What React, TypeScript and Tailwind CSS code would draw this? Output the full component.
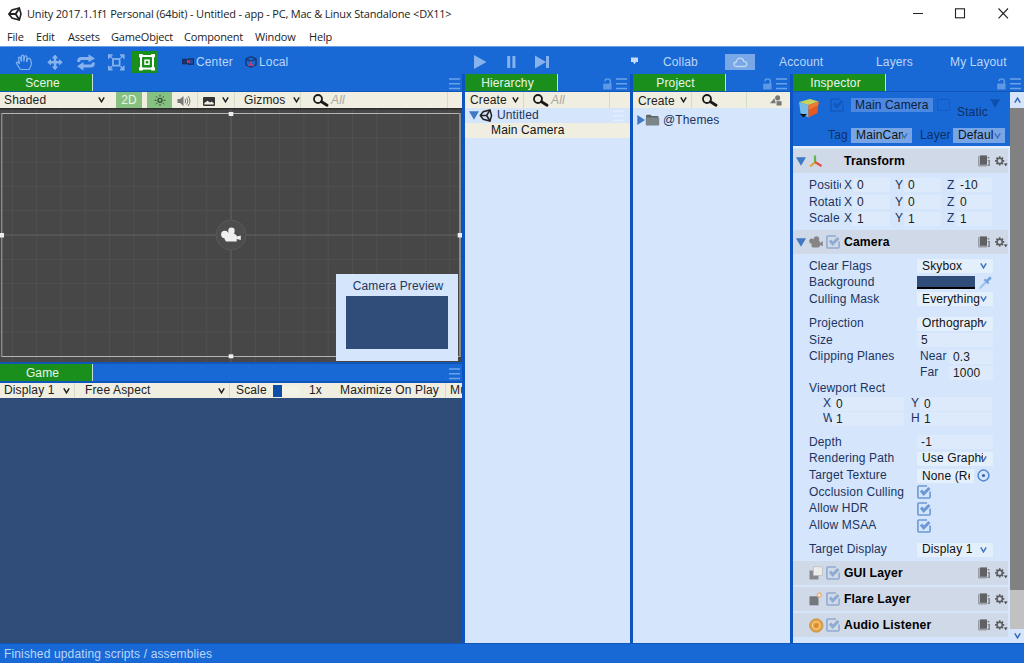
import { ReactNode } from "react";

function UnityLogo({ className }: { className: string }) {
  return (
    <svg className={className} viewBox="0 0 14 14" fill="none" stroke="#222" strokeWidth={1.6}>
      <path d="M0.9 7 L4 2.9 L11.3 1 L13 7 L11.3 13 L4 11.1 Z" />
      <path d="M1 7 H7.6 L11.3 1.2 M7.6 7 L11.3 12.8" strokeWidth={1.8} />
    </svg>
  );
}

function Chevron({ className }: { className: string }) {
  return (
    <svg className={`w-[7px] h-[6px] shrink-0 ${className}`} viewBox="0 0 7 6" fill="none" stroke="currentColor" strokeWidth={1.5}>
      <path d="M0.8 0.4 L3.5 4.8 L6.2 0.4" />
    </svg>
  );
}

function MenuLines({ className }: { className: string }) {
  return (
    <svg className={`w-[11px] h-[12px] shrink-0 ${className}`} viewBox="0 0 11 12" stroke="currentColor" strokeWidth={1.4}>
      <path d="M0 1 H11 M0 5.7 H11 M0 10.5 H11" />
    </svg>
  );
}

function Lock() {
  return (
    <svg className="w-[9px] h-[12px] shrink-0 text-[#5f98e4]" viewBox="0 0 9 12">
      <path d="M2.2 3.2 V2.6 Q2.2 1 4.8 1 Q7.3 1 7.3 3 V6" fill="none" stroke="currentColor" strokeWidth={1.6} />
      <rect x="0.2" y="5.6" width="8.3" height="5.8" fill="currentColor" />
    </svg>
  );
}

function Search() {
  return (
    <svg className="w-[16px] h-[13px] shrink-0" viewBox="0 0 16 13" fill="none" stroke="#1a1a1a">
      <circle cx="5" cy="5" r="4" strokeWidth={1.8} />
      <path d="M8.5 7.8 L14 11.2" strokeWidth={2.8} strokeLinecap="round" />
    </svg>
  );
}

function Check({ className = "text-[#6c98d4]" }: { className?: string }) {
  return (
    <svg className={`w-[14px] h-[14px] shrink-0 ${className}`} viewBox="0 0 14 14" fill="none" stroke="currentColor">
      <path d="M10 1 H1.8 Q0.9 1 0.9 2 V12 Q0.9 13 1.8 13 H12.2 Q13.1 13 13.1 12 V6.5" strokeWidth={1.6} />
      <path d="M4 5.6 L6.7 8.7 L12.4 3" strokeWidth={3} />
    </svg>
  );
}

function Triangle({ className }: { className: string }) {
  return (
    <svg className={`w-[10px] h-[9px] shrink-0 ${className}`} viewBox="0 0 10 9" fill="currentColor">
      <path d="M0 0.3 H10 L5 8.8 Z" />
    </svg>
  );
}

function CameraIcon() {
  return (
    <svg className="w-[14px] h-[12px] shrink-0" viewBox="0 0 14 12" fill="#858585">
      <circle cx="7.5" cy="3" r="2.7" />
      <circle cx="2.8" cy="5" r="2.6" />
      <rect x="2.5" y="4.5" width="8.3" height="7" rx="1.4" />
      <path d="M10 6.8 L11.5 6.8 L13.8 5 V10.3 L11.5 9.2 H10 Z" />
    </svg>
  );
}

function BookIcon() {
  return (
    <svg className="w-[12px] h-[12px] shrink-0" viewBox="0 0 12 12">
      <path d="M0 1.6 L1.6 0.4 V10 L8.8 10 V11.6 H1 L0 10.8 Z" fill="#9a9da3" />
      <rect x="2" y="0.4" width="7" height="9.4" fill="#5f6165" />
      <path d="M9.6 2.8 H11.3 M9.8 5.6 H11.8 M11.2 6 V10.4 H9.6" stroke="#7c7f85" strokeWidth={1.4} fill="none" />
    </svg>
  );
}

function GearIcon() {
  return (
    <svg className="w-[13px] h-[11px] shrink-0" viewBox="0 0 13 11" fill="none" stroke="#5a5c60">
      <circle cx="4.7" cy="4.9" r="2.6" strokeWidth={1.5} />
      <path d="M4.7 0.3 V2 M4.7 7.8 V9.6 M0.1 4.9 H1.8 M7.6 4.9 H9.3 M1.4 1.6 L2.7 2.9 M6.7 6.9 L8 8.2 M1.4 8.2 L2.7 6.9 M6.7 2.9 L8 1.6" strokeWidth={1.7} />
      <path d="M8.9 7.5 H12.6 L10.7 10.3 Z" fill="#44464a" stroke="none" />
    </svg>
  );
}

function Tab({ label, children }: { label: string; children?: ReactNode }) {
  return (
    <div className="flex h-[18px] shrink-0 items-center justify-between border-b border-[#1157b8] bg-[#1869d6]">
      <div className="h-[17px] w-[93px] border-r border-[#c4e2d4] bg-[#1b8f1b] pr-[7px] pt-px text-center leading-[17px] text-[#e8f5ee]">
        {label}
      </div>
      <div className="flex items-center gap-[4px] pr-[3px] pt-[2px]">{children}</div>
    </div>
  );
}

function Divider({ className }: { className: string }) {
  return <div className={`h-4 w-px shrink-0 bg-[#d0dec3] ${className}`} />;
}

function Header({ title, icon, check = true, open = false }: { title: string; icon: ReactNode; check?: boolean; open?: boolean }) {
  return (
    <div className="mr-[2px] flex h-6 shrink-0 items-center bg-[#d0d9e7] pl-[3px]">
      <div className="w-[13px]">{open && <Triangle className="text-[#3f78c3]" />}</div>
      <div className="flex w-[17px] items-center">{icon}</div>
      <div className="w-[18px]">{check && <Check className="text-[#8fabd1]" />}</div>
      <span className="flex-1 text-[12.2px] font-bold text-black">{title}</span>
      <BookIcon />
      <div className="ml-[5px]">
        <GearIcon />
      </div>
    </div>
  );
}

function Row({ label, children }: { label: string; children?: ReactNode }) {
  return (
    <div className="flex h-[16.7px] shrink-0 items-center pl-4">
      <span className="w-[108px] shrink-0 whitespace-nowrap">{label}</span>
      {children}
    </div>
  );
}

function Select({ value }: { value: string }) {
  return (
    <div className="flex h-[14px] w-[76px] items-center bg-[#e4effc] pl-[5px] text-[#111]">
      <span className="w-[61px] shrink-0 overflow-hidden whitespace-nowrap">{value}</span>
      <Chevron className="-ml-[3px] text-[#3c73c0]" />
    </div>
  );
}

function Field({ value, className = "w-[76px]" }: { value: string; className?: string }) {
  return <div className={`h-[14px] shrink-0 bg-[#dceafb] pl-1 leading-[14px] text-[#222] ${className}`}>{value}</div>;
}

function VectorRow({ label, values }: { label: string; values: string[] }) {
  return (
    <div className="flex h-[16.7px] items-center pl-4">
      <span className="w-[32px] shrink-0 overflow-hidden whitespace-nowrap">{label}</span>
      <span className="ml-[3px] w-[9px]">X</span>
      <Field value={values[0]} className="w-[37px]" />
      <span className="ml-[5px] w-[9px]">Y</span>
      <Field value={values[1]} className="w-[37px]" />
      <span className="ml-[6px] w-[9px]">Z</span>
      <Field value={values[2]} className="w-[36px]" />
    </div>
  );
}

function PairRow({ items }: { items: [string, string][] }) {
  return (
    <div className="flex h-[15px] items-center pl-[30px]">
      {items.map(([label, value]) => (
        <div key={label} className="flex w-[88px] items-center">
          <span className="w-[9px] overflow-hidden">{label}</span>
          <Field value={value} className="w-[72px]" />
        </div>
      ))}
    </div>
  );
}

function Toolbar() {
  return (
    <div className="flex h-7 shrink-0 items-center border-t border-[#6aa0e8] pt-[3px] text-[#bcd6f8]">
      <svg className="h-6 w-[160px] shrink-0" viewBox="0 0 160 24" fill="none" stroke="#86b2ee">
        <path d="M20 19 L16.3 13 Q17.5 11 19.5 13.8 L18.5 8 Q19.5 6.3 20.6 8 L21.5 11.5 V6 Q22.6 4.4 23.8 6 V11.5 L24.7 6.3 Q26 5 27 6.8 L26.5 12 L28 8.8 Q29.5 7.5 30.3 9.3 L31.5 13 Q31.5 16 29 19.5 H21.5 Z" strokeWidth={1.2} />
        <path d="M55 6.5 V18 M49.5 12.3 H60.5" strokeWidth={2.6} />
        <path d="M55 4.5 L58.2 8.3 H51.8 Z M55 20.2 L58.2 16.4 H51.8 Z M47.2 12.3 L51 9 V15.6 Z M62.8 12.3 L59 9 V15.6 Z" fill="#86b2ee" stroke="none" />
        <path d="M78.7 12 V11 Q78.7 8.4 81.5 8.4 H90 M93.3 12.5 V13.5 Q93.3 16 90.5 16 H82" strokeWidth={3} />
        <path d="M88.5 4.2 L95 8.4 L88.5 12.2 Z M83.5 12 L77 16.2 L83.5 20.4 Z" fill="#86b2ee" stroke="none" />
        <rect x="113" y="9" width="6.6" height="6.6" strokeWidth={1.8} />
        <path d="M108.8 8.8 V5 H112.6 M109 5 L112 8 M120 5 H123.8 V8.8 M123.6 5 L120.6 8 M108.8 15.8 V19.6 H112.6 M109 19.4 L112 16.4 M123.8 15.8 V19.6 H120 M123.6 19.4 L120.6 16.4" strokeWidth={1.6} />
        <rect x="132" y="1" width="26" height="22" fill="#1b8f1b" stroke="none" />
        <g stroke="#fff">
          <rect x="141" y="6" width="12" height="12.6" strokeWidth={2} />
          <rect x="145" y="10.2" width="4" height="4" strokeWidth={1.5} />
          <path d="M139 5.6 H142.8 M151.2 5.6 H155 M139 18.9 H142.8 M151.2 18.9 H155" strokeWidth={3.2} />
        </g>
      </svg>
      <svg className="ml-[22px] h-[10px] w-[13px] shrink-0" viewBox="0 0 13 10">
        <rect x="0.6" y="2.3" width="4.5" height="4.5" fill="#15366f" stroke="#102b5c" />
        <rect x="6.5" y="1.8" width="5" height="5.5" fill="#244a98" stroke="#102b5c" />
        <rect x="5" y="3.3" width="2.6" height="2.6" fill="#e0355a" />
      </svg>
      <span className="ml-px w-[49px]">Center</span>
      <svg className="h-[12px] w-[12px] shrink-0" viewBox="0 0 12 12" fill="none">
        <path d="M6 0.7 L11 3 V8.8 L6 11.3 L1 8.8 V3 Z M1 3 L6 5.3 L11 3" stroke="#173873" strokeWidth={1.4} />
        <path d="M6 5 V8.2 L3.4 9.8 M6 8.2 L8.8 9.8" stroke="#d83a62" strokeWidth={1.4} />
      </svg>
      <span className="ml-[2px] w-[214px]">Local</span>
      <svg className="h-[14px] w-[78px] shrink-0" viewBox="0 0 78 14" fill="#86b2ee">
        <path d="M1 0 L13.5 7 L1 14 Z M34.2 1 H37.2 V13 H34.2 Z M39.4 1 H42.4 V13 H39.4 Z M62 0.5 L73 7 L62 13.5 Z M73 1 H76 V13 H73 Z" />
      </svg>
      <svg className="ml-[79px] mt-[7px] h-[8px] w-[9px] shrink-0 self-start" viewBox="0 0 9 8" fill="#c5dcf8">
        <path d="M1 0.5 H8 V5 H6 L4.5 7.3 L3 5 H1 Z" />
      </svg>
      <span className="ml-[24px] w-[62px]">Collab</span>
      <div className="flex h-4 w-[30px] items-center justify-center bg-[#7aa7e6]">
        <svg className="h-[11px] w-[15px]" viewBox="0 0 15 11" fill="none" stroke="#bdd7f7" strokeWidth={1.3}>
          <path d="M4 9.5 Q1 9.5 1 7.3 Q1 5.2 3.4 5 Q4 1.2 7 1.2 Q10.3 1.2 10.6 4.3 Q13.8 4.3 13.8 7 Q13.8 9.5 11 9.5 Z" />
        </svg>
      </div>
      <span className="ml-[24px] w-[97px]">Account</span>
      <span className="w-[74px]">Layers</span>
      <span className="whitespace-nowrap">My Layout</span>
    </div>
  );
}

function SceneView() {
  const vertical = Array.from({ length: 19 }, (_, i) => 231 + (i - 9) * 24.3);
  const horizontal = Array.from({ length: 11 }, (_, i) => 127 + (i - 5) * 24.3);
  return (
    <div className="relative h-[254px] shrink-0 overflow-hidden bg-[#474747]">
      <svg className="block h-[254px] w-[462px]" viewBox="0 0 462 254">
        <g stroke="#505050" strokeWidth={1}>
          {vertical.map((x) => (
            <path key={x} d={`M${x} 0 V254`} />
          ))}
          {horizontal.map((y) => (
            <path key={y} d={`M0 ${y} H462`} />
          ))}
        </g>
        <path d="M231 0 V254 M0 127 H462" stroke="#595959" strokeWidth={1.5} />
        <path d="M0 0.7 H462" stroke="#2e2e2e" strokeWidth={1.6} />
        <path d="M2 5.5 H460 M2 248.5 H460" stroke="#b5b5b5" />
        <path d="M1.8 5 V249" stroke="#a5a5a5" />
        <path d="M460 5 V249" stroke="#8b8b8b" strokeWidth={2} />
        <circle cx="231" cy="127" r="15" fill="#4d4d4d" stroke="#595959" />
        <g fill="#eeeeee">
          <rect x="228.7" y="4" width="4.6" height="4" />
          <rect x="228.7" y="246.3" width="4.6" height="4" />
          <rect x="0" y="125" width="4" height="4.5" />
          <rect x="457.7" y="125" width="4.3" height="4.5" />
          <circle cx="231.5" cy="122.7" r="3.2" />
          <circle cx="224.8" cy="126.5" r="3.7" />
          <path d="M225 124.5 L233 124.5 L236.7 127.5 V128.6 L240.8 127.4 V132 L236.7 131 V133.5 H226 L224.5 131 Z" />
        </g>
      </svg>
      <div className="absolute left-[336px] top-[166px] flex h-[87px] w-[122px] flex-col items-center bg-[#d4e5fc] pt-[5px]">
        <span className="h-[17px] pl-[2px] leading-[14px] text-[#24365a]">Camera Preview</span>
        <div className="h-[53px] w-[102px] bg-[#304d79]" />
      </div>
    </div>
  );
}

function SceneToolbar() {
  return (
    <div className="flex h-4 shrink-0 items-center bg-[#efeee0] text-[#222]">
      <span className="ml-1 w-[94px]">Shaded</span>
      <Chevron className="" />
      <div className="ml-[11px] flex h-4 w-[26px] items-center justify-center bg-[#86c182] text-[#eaf6e6]">2D</div>
      <div className="ml-[5px] flex h-4 w-[25px] items-center justify-center bg-[#86c182]">
        <svg className="h-3 w-3" viewBox="0 0 12 12" stroke="#344734" fill="none">
          <circle cx="6" cy="6.3" r="2" strokeWidth={1.3} />
          <path d="M6 0.8 V2.6 M6 10 V11.8 M0.5 6.3 H2.4 M9.6 6.3 H11.5 M2 2.3 L3.4 3.7 M10 2.3 L8.6 3.7 M2 10.3 L3.4 8.9 M10 10.3 L8.6 8.9" />
        </svg>
      </div>
      <svg className="ml-[5px] mt-px h-3 w-[14px]" viewBox="0 0 14 12" fill="none" stroke="#777">
        <path d="M0.5 4 H3 L6.5 1 V11 L3 8 H0.5 Z" fill="#777" stroke="none" />
        <path d="M8 4 Q9.3 6 8 8.2 M9.7 2.5 Q12 6 9.7 9.7 M11.3 1.2 Q14.5 6 11.3 11" />
      </svg>
      <Divider className="ml-[6px]" />
      <svg className="ml-[5px] mt-[2px] h-[9px] w-3" viewBox="0 0 12 9">
        <rect width="12" height="9" rx="1" fill="#333" />
        <path d="M1.3 7.5 V6 L4.5 3.8 L7 5.5 L8.5 4.6 L10.7 6 V7.5 Z" fill="#efeee0" />
      </svg>
      <Chevron className="ml-[7px]" />
      <Divider className="ml-[5px]" />
      <span className="ml-[9px] w-[49px]">Gizmos</span>
      <Chevron className="" />
      <Divider className="mr-[12px]" />
      <Search />
      <span className="ml-[2px] italic text-[#aaa9a0]">All</span>
      <Divider className="ml-auto mr-[14px]" />
    </div>
  );
}

function GameToolbar() {
  return (
    <div className="flex h-[15px] shrink-0 items-center overflow-hidden whitespace-nowrap bg-[#efeee0] text-[#222]">
      <span className="ml-1 w-[59px] shrink-0">Display 1</span>
      <Chevron className="" />
      <Divider className="ml-[4px]" />
      <span className="ml-[10px] w-[133px] shrink-0">Free Aspect</span>
      <Chevron className="" />
      <Divider className="ml-[4px]" />
      <span className="ml-[6px] w-[37px] shrink-0">Scale</span>
      <div className="h-[12px] w-[9px] shrink-0 bg-[#0c4da8]" />
      <div className="h-[8px] w-[18px] shrink-0 bg-[#f3f2e6]" />
      <span className="ml-[9px] w-[31px] shrink-0">1x</span>
      <span className="w-[105px] shrink-0">Maximize On Play</span>
      <Divider className="" />
      <span className="ml-[4px] shrink-0">Mute Audio</span>
    </div>
  );
}

function Hierarchy() {
  return (
    <div className="flex w-[165px] shrink-0 flex-col">
      <Tab label="Hierarchy">
        <Lock />
        <MenuLines className="text-[#6da2e9]" />
      </Tab>
      <div className="flex h-4 shrink-0 items-center bg-[#efeee0] text-[#222]">
        <span className="ml-[5px] w-[42px]">Create</span>
        <Chevron className="" />
        <Divider className="ml-[4px] mr-[9px]" />
        <Search />
        <span className="ml-[2px] italic text-[#aaa9a0]">All</span>
        <Divider className="ml-auto mr-[20px]" />
      </div>
      <div className="flex-1 bg-[#d4e5fc]">
        <div className="flex h-[15px] items-center pl-1 text-[#1c3461]">
          <Triangle className="text-[#3f78c3]" />
          <UnityLogo className="h-[13px] w-[14px]" />
          <span className="ml-[4px] flex-1">Untitled</span>
          <MenuLines className="mr-[6px] text-[#e4eefc]" />
        </div>
        <div className="h-[15px] bg-[#efeee0] pl-[26px] leading-[15px] text-[#111]">Main Camera</div>
      </div>
    </div>
  );
}

function Project() {
  return (
    <div className="flex w-[157px] shrink-0 flex-col">
      <Tab label="Project">
        <Lock />
        <MenuLines className="text-[#6da2e9]" />
      </Tab>
      <div className="flex h-4 shrink-0 items-center bg-[#efeee0] text-[#222]">
        <span className="ml-[5px] w-[42px] pt-[2px]">Create</span>
        <Chevron className="" />
        <Divider className="ml-[4px] mr-[10px]" />
        <Search />
        <Divider className="ml-[28px]" />
        <svg className="ml-[23px] mt-px h-[11px] w-[12px]" viewBox="0 0 11 10" fill="#777">
          <path d="M0 7.5 L4 3 L5.3 7.5 Z" />
          <circle cx="7" cy="2.6" r="2.3" />
          <rect x="6" y="5.6" width="4.6" height="4" />
        </svg>
      </div>
      <div className="flex-1 bg-[#d4e5fc] pt-[4px]">
        <div className="flex h-4 items-center pl-1 text-[#1c3461]">
          <svg className="h-[10px] w-[8px]" viewBox="0 0 8 10" fill="#3f78c3">
            <path d="M0.3 0 L8 5 L0.3 10 Z" />
          </svg>
          <svg className="h-[12px] w-[15px]" viewBox="0 0 14 12">
            <path d="M0.5 2 Q0.5 0.7 1.8 0.7 H5 L6.5 2 H12 Q13 2 13 3 V4 H0.5 Z" fill="#5e6668" />
            <rect x="0.3" y="3.6" width="13.4" height="8" rx="1" fill="#7c8688" />
          </svg>
          <span className="ml-[3px]">@Themes</span>
        </div>
      </div>
    </div>
  );
}

function ObjectHeader() {
  return (
    <div className="flex h-[56px] shrink-0 flex-col border-b-2 border-[#e6f0fd] bg-[#1869d6] text-[#0e2f66]">
      <div className="flex h-[33px] items-start pl-[5px] pt-[5px]">
        <svg className="h-[23px] w-[22px] shrink-0" viewBox="0 0 22 23">
          <path d="M1 5 L10.5 8 V20.5 L2.5 16 Z" fill="#75bde8" />
          <path d="M10.5 8 L20.5 4.5 L19.5 16 L10.5 20.5 Z" fill="#e65a1d" />
          <path d="M1 5 L12 2 L20.5 4.5 L10.5 8 Z" fill="#c7d35b" />
          <path d="M10.5 8 L20.5 4.5 V8 L10.5 13 Z" fill="#ea7a35" />
          <path d="M2 17 H9 L5.5 20.5 Z" fill="#111" />
        </svg>
        <div className="ml-[10px] mt-px">
          <Check className="text-[#1259bf]" />
        </div>
        <div className="ml-[7px] mt-px h-[14px] w-[82px] bg-[#4c88df] pl-[4px] leading-[14px] text-[#0b1c3c]">Main Camera</div>
        <div className="ml-[4px] mt-[2px] h-3 w-[13px] rounded-[2px] border border-[#125cc5]" />
        <span className="ml-[7px] mt-[8px] leading-[14px]">Static</span>
        <Triangle className="ml-[2px] mt-[2px] text-[#0f50ae]" />
      </div>
      <div className="flex h-[18px] items-center pl-[35px] pt-[3px]">
        <span className="w-[23px] shrink-0">Tag</span>
        <div className="flex h-[15px] w-[61px] shrink-0 items-center bg-[#77a5e6] pl-[5px] text-[#111]">
          <span className="w-[47px] shrink-0 overflow-hidden whitespace-nowrap">MainCamera</span>
          <Chevron className="-ml-[2px] text-[#3c73c0]" />
        </div>
        <span className="ml-[8px] w-[33px] shrink-0">Layer</span>
        <div className="flex h-[15px] w-[52px] shrink-0 items-center bg-[#77a5e6] pl-[5px] text-[#111]">
          <span className="w-[36px] shrink-0 overflow-hidden whitespace-nowrap">Default</span>
          <Chevron className="text-[#3c73c0]" />
        </div>
      </div>
    </div>
  );
}

function Inspector() {
  return (
    <div className="flex w-[231px] shrink-0 flex-col">
      <Tab label="Inspector">
        <Lock />
        <MenuLines className="text-[#6da2e9]" />
      </Tab>
      <div className="flex min-h-0 flex-1">
        <div className="flex w-[217px] shrink-0 flex-col bg-[#d4e5fc] text-[#1c3461]">
          <ObjectHeader />
          <div className="h-px shrink-0" />
          <Header
            title="Transform"
            open
            check={false}
            icon={
              <svg className="h-[14px] w-[14px]" viewBox="0 0 14 14" fill="none" strokeWidth={2.2}>
                <path d="M6 8 V1.5" stroke="#5fb64e" />
                <path d="M6 8.3 L1 12.3" stroke="#d5a848" />
                <path d="M6 8 L12.5 12" stroke="#e24d40" />
              </svg>
            }
          />
          <div className="h-[57px] shrink-0 pt-[4px]">
            <VectorRow label="Position" values={["0", "0", "-10"]} />
            <VectorRow label="Rotation" values={["0", "0", "0"]} />
            <VectorRow label="Scale" values={["1", "1", "1"]} />
          </div>
          <Header title="Camera" open icon={<CameraIcon />} />
          <div className="h-[307px] shrink-0 pt-[3.7px]">
            <Row label="Clear Flags">
              <Select value="Skybox" />
            </Row>
            <Row label="Background">
              <div className="h-[13px] w-[58px] border-b-2 border-black bg-[#304d79]" />
              <svg className="ml-[3px] h-[14px] w-[14px]" viewBox="0 0 14 14">
                <path d="M0.5 13.5 L2 10.5 L7.5 5 L9 6.5 L3.5 12 Z" fill="#a0c1ed" />
                <path d="M5.6 4 L7 2.8 L8.7 3.8 L11 1 Q14 0.3 13.3 3 L10.2 5.6 L11.2 7 L10 8.2 Z" fill="#74a1de" />
              </svg>
            </Row>
            <Row label="Culling Mask">
              <Select value="Everything" />
            </Row>
            <div className="h-[7.5px]" />
            <Row label="Projection">
              <Select value="Orthographic" />
            </Row>
            <Row label="Size">
              <Field value="5" />
            </Row>
            <Row label="Clipping Planes">
              <span className="w-[32px] pl-[3px]">Near</span>
              <Field value="0.3" className="w-[44px]" />
            </Row>
            <div className="flex h-[15px] items-center pl-[127px]">
              <span className="w-[29px]">Far</span>
              <Field value="1000" className="w-[44px]" />
            </div>
            <div className="h-4">
              <Row label="Viewport Rect" />
            </div>
            <PairRow items={[["X", "0"], ["Y", "0"]]} />
            <PairRow items={[["W", "1"], ["H", "1"]]} />
            <div className="h-[7.5px]" />
            <Row label="Depth">
              <Field value="-1" />
            </Row>
            <Row label="Rendering Path">
              <Select value="Use Graphics Settings" />
            </Row>
            <Row label="Target Texture">
              <div className="h-[14px] w-[57px] bg-[#e4effc] pl-[5px] leading-[14px] text-[#111]">
                <div className="w-[48px] overflow-hidden whitespace-nowrap">None (Render Texture)</div>
              </div>
              <svg className="ml-[3px] h-[13px] w-[13px]" viewBox="0 0 13 13">
                <circle cx="6.5" cy="6.5" r="5.4" fill="none" stroke="#5488cf" strokeWidth={1.5} />
                <circle cx="6.5" cy="6.5" r="1.6" fill="#3468b4" />
              </svg>
            </Row>
            <Row label="Occlusion Culling">
              <Check />
            </Row>
            <Row label="Allow HDR">
              <Check />
            </Row>
            <Row label="Allow MSAA">
              <Check />
            </Row>
            <div className="h-[7.5px]" />
            <Row label="Target Display">
              <Select value="Display 1" />
            </Row>
          </div>
          <div className="flex flex-col gap-[2px]">
            <Header
              title="GUI Layer"
              icon={
                <svg className="h-[14px] w-[14px]" viewBox="0 0 14 14">
                  <rect x="0.5" y="4.5" width="9" height="9" fill="#85898e" />
                  <rect x="4.3" y="0.8" width="9" height="8.6" fill="#ececea" stroke="#bbb" strokeWidth={0.7} />
                </svg>
              }
            />
            <Header
              title="Flare Layer"
              icon={
                <svg className="h-[14px] w-[14px]" viewBox="0 0 14 14">
                  <rect x="0.5" y="4.3" width="9" height="9" fill="#74787c" />
                  <circle cx="10.3" cy="3" r="2" fill="#f5e8dc" stroke="#e8b37e" strokeWidth={1.3} />
                </svg>
              }
            />
            <Header
              title="Audio Listener"
              icon={
                <svg className="h-[15px] w-[15px]" viewBox="0 0 15 15" fill="none">
                  <circle cx="7.3" cy="7.5" r="6.7" fill="#e5a03f" stroke="#b98f57" strokeWidth={0.8} />
                  <circle cx="7.3" cy="7.5" r="3.8" stroke="#f2d59a" strokeWidth={1.1} />
                  <circle cx="7.3" cy="7.5" r="1.9" fill="#d98a25" />
                </svg>
              }
            />
          </div>
        </div>
        <div className="flex w-[14px] flex-col bg-[#818181]">
          <div className="flex h-4 items-center justify-center bg-[#d4e5fc]">
            <Chevron className="rotate-180 text-[#3468b4]" />
          </div>
          <div className="mt-auto h-[39px] bg-[#c1c1c1]" />
          <div className="flex h-[14px] items-center justify-center bg-[#d4e5fc]">
            <Chevron className="text-[#3468b4]" />
          </div>
        </div>
      </div>
    </div>
  );
}

export default function App() {
  return (
    <div className="flex h-[663px] w-[1024px] flex-col overflow-hidden bg-[#1869d6] font-['Liberation_Sans',Arial,sans-serif] text-[12px] leading-[15px] tracking-[0.14px]">
      <div className="flex h-[27px] shrink-0 items-center bg-white font-['Open_Sans','Noto_Sans',sans-serif] text-[11px] tracking-[-0.18px] text-[#222]">
        <UnityLogo className="ml-2 h-[14px] w-[14px]" />
        <span className="ml-[5px] whitespace-nowrap">Unity 2017.1.1f1 Personal (64bit) - Untitled - app - PC, Mac &amp; Linux Standalone &lt;DX11&gt;</span>
        <svg className="ml-auto mr-[15px] h-[11px] w-[96px]" viewBox="0 0 96 11" fill="none" stroke="#222" strokeWidth={1.1}>
          <path d="M0 5.5 H10 M85.5 0.5 L95 10.3 M95 0.5 L85.5 10.3" />
          <rect x="42.5" y="0.8" width="9" height="9" />
        </svg>
      </div>
      <div className="flex h-[19px] shrink-0 items-center bg-white font-['Open_Sans','Noto_Sans',sans-serif] text-[11px] tracking-[-0.18px] text-[#222]">
        <span className="ml-[7px] w-[29px]">File</span>
        <span className="w-[32px]">Edit</span>
        <span className="w-[43px]">Assets</span>
        <span className="w-[73px]">GameObject</span>
        <span className="w-[71px]">Component</span>
        <span className="w-[54px]">Window</span>
        <span>Help</span>
      </div>
      <Toolbar />
      <div className="flex h-[569px] shrink-0 bg-[#0d54c0]">
        <div className="mr-[3px] flex w-[462px] shrink-0 flex-col">
          <Tab label="Scene">
            <MenuLines className="-mr-[1px] text-[#6da2e9]" />
          </Tab>
          <SceneToolbar />
          <SceneView />
          <div className="h-[2px] shrink-0 bg-[#1157b8]" />
          <div className="h-[19px] shrink-0">
            <Tab label="Game">
              <MenuLines className="-mr-[1px] text-[#6da2e9]" />
            </Tab>
          </div>
          <GameToolbar />
          <div className="flex-1 bg-[#304d79]" />
        </div>
        <Hierarchy />
        <div className="w-[3px] shrink-0" />
        <Project />
        <div className="w-[3px] shrink-0" />
        <Inspector />
      </div>
      <div className="flex h-5 shrink-0 items-center border-t border-[#1157b8] pl-1 pt-[2px] text-[#bcd6f8]">Finished updating scripts / assemblies</div>
    </div>
  );
}
